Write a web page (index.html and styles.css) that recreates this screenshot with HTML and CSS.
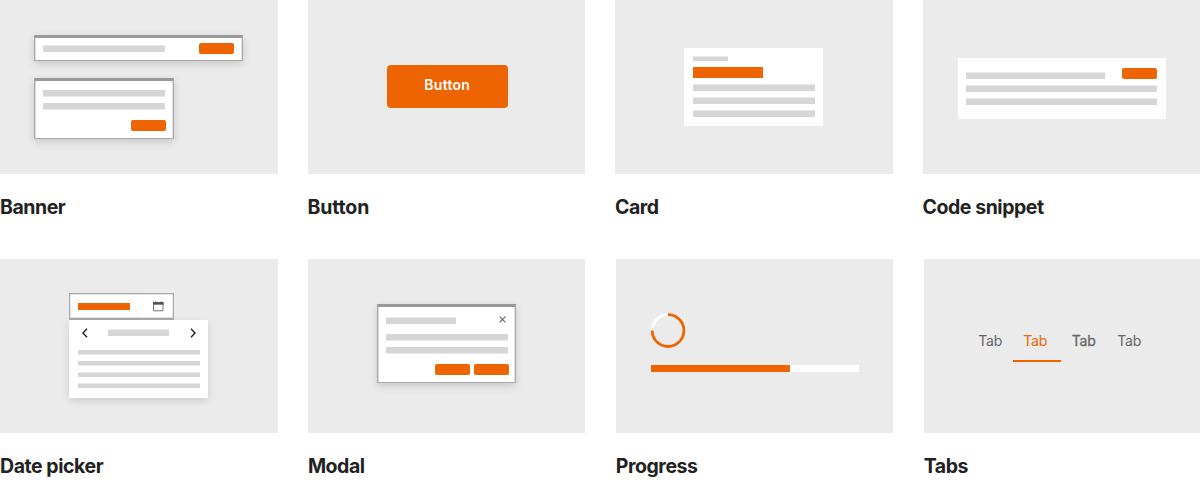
FILE: index.html
```html
<!DOCTYPE html>
<html lang="en">
<head>
<meta charset="utf-8">
<title>Components</title>
<link rel="stylesheet" href="styles.css">
</head>
<body>
<main class="gallery">
  <section class="row row-first">
    <article class="item">
      <div class="thumb thumb-banner">
        <div class="panel banner-wide"><span class="line line-top w122"></span><span class="pill"></span></div>
        <div class="panel banner-box"><span class="line w122"></span><span class="line w122"></span><span class="pill"></span></div>
      </div>
      <h2>Banner</h2>
    </article>
    <article class="item">
      <div class="thumb thumb-button"><div class="big-button">Button</div></div>
      <h2 class="title-button">Button</h2>
    </article>
    <article class="item">
      <div class="thumb thumb-card">
        <div class="sheet card">
          <span class="line line-thin line-top w35"></span>
          <span class="card-title"></span>
          <span class="line line-top w122"></span><span class="line line-top w122"></span><span class="line line-top w122"></span>
        </div>
      </div>
      <h2>Card</h2>
    </article>
    <article class="item">
      <div class="thumb thumb-code">
        <div class="sheet code">
          <div class="code-head"><span class="line line-top w139"></span><span class="pill"></span></div>
          <span class="line line-top w191"></span><span class="line line-top w191"></span>
        </div>
      </div>
      <h2>Code snippet</h2>
    </article>
  </section>

  <section class="row row-second">
    <article class="item">
      <div class="thumb thumb-date">
        <div class="date-field">
          <span class="date-value"></span>
          <svg class="calendar" width="12" height="11" viewBox="0 0 12 11"><path d="M1.5 1.5H11v8.3H1.5z" fill="none" stroke="#777"/><path d="M1 1h10.5v2.7H1z" fill="#555"/><path d="M3.5 .3v1M9 .3v1" stroke="#777"/></svg>
        </div>
        <div class="sheet date-panel">
          <div class="date-nav">
            <svg width="6" height="10" viewBox="0 0 6 10"><path d="M5 .8 1 5l4 4.2" class="chevron"/></svg>
            <span class="line line-top w61"></span>
            <svg width="6" height="10" viewBox="0 0 6 10"><path d="m1 .8 4 4.2-4 4.2" class="chevron"/></svg>
          </div>
          <div class="date-lines">
            <span class="line line-thin w122"></span><span class="line line-thin w122"></span><span class="line line-thin line-top w122"></span><span class="line line-thin line-top w122"></span>
          </div>
        </div>
      </div>
      <h2>Date picker</h2>
    </article>
    <article class="item">
      <div class="thumb thumb-modal">
        <div class="panel modal">
          <div class="modal-head"><span class="line line-top w70"></span><svg width="7" height="7" viewBox="0 0 7 7"><path d="m.6.6 5.8 5.8M6.4.6.6 6.4" stroke="#666" stroke-width="1.2"/></svg></div>
          <div class="modal-body"><span class="line w122"></span><span class="line w122"></span></div>
          <div class="modal-actions"><span class="pill"></span><span class="pill"></span></div>
        </div>
      </div>
      <h2>Modal</h2>
    </article>
    <article class="item">
      <div class="thumb thumb-progress">
        <svg class="ring" width="36" height="36" viewBox="0 0 36 36"><g fill="none" stroke-width="2.8"><circle cx="17" cy="17.6" r="15.9" stroke="#fff"/><path d="M17 1.7A15.9 15.9 0 1 1 1.1 17.6" stroke="#ed6400"/></g></svg>
        <div class="track"><div class="fill"></div></div>
      </div>
      <h2>Progress</h2>
    </article>
    <article class="item">
      <div class="thumb thumb-tabs">
        <span class="tab">Tab</span><span class="tab tab-active">Tab</span><span class="tab tab-strong">Tab</span><span class="tab">Tab</span>
      </div>
      <h2>Tabs</h2>
    </article>
  </section>
</main>
</body>
</html>
```
FILE: styles.css
```css
* { box-sizing: border-box; }
body { margin: 0; background: #fff; color: #222; font-family: Inter, "Liberation Sans", sans-serif; }
.gallery { width: 1200px; height: 480px; overflow: hidden; }
.row { display: grid; column-gap: 30px; }
.row-first { grid-template-columns: 277.5px 277.5px 277.5px 277.5px; height: 259px; }
.row-second { grid-template-columns: 277.5px 277.5px 277.5px 276.5px; column-gap: 30.4px; }
.thumb { height: 174px; background: #ebebeb; }
h2 { margin: 20px 0 0; font-size: 19.5px; line-height: 26px; font-weight: 700; letter-spacing: -0.45px; white-space: nowrap; }
.title-button { letter-spacing: -0.15px; }
svg { display: block; flex: none; }

.line { display: block; flex: none; height: 7px; background: #d6d6d6; border-bottom: 1px solid #e9e9e9; }
.line-top { border-bottom: 0; border-top: 1px solid #e9e9e9; }
.line-thin { height: 5px; }
.w35 { width: 35px; }
.w61 { width: 61px; }
.w70 { width: 70px; }
.w122 { width: 122px; }
.w139 { width: 139px; }
.w191 { width: 191px; }
.pill { display: block; flex: none; width: 35px; height: 11px; border-radius: 2px; background: #ed6400; }

.panel { background: #fff; border: 1px solid #a9a9a9; border-top: 3px solid #999; box-shadow: inset 0.5px 0 0 #b5b5b5, inset -0.5px 0 0 #c5c5c5, 0 3px 8px rgba(0, 0, 0, 0.15); }
.sheet { background: #fff; }

.thumb-banner { display: flex; flex-direction: column; gap: 17px; padding: 35px 0 0 34px; }
.banner-wide { display: flex; justify-content: space-between; align-items: flex-start; width: 209px; height: 26px; padding: 5px 8px 0; }
.banner-wide .line { margin-top: 2px; }
.banner-box { display: flex; flex-direction: column; gap: 6px; width: 140px; height: 61px; padding: 9px 7px 0 8px; }
.banner-box .pill { align-self: flex-end; margin-top: 4px; }

.thumb-button { padding: 65px 0 0 79.5px; }
.big-button { width: 120.5px; height: 43.4px; border-radius: 4px; background: #ed6400; color: #fff; font-size: 14px; line-height: 40px; font-weight: 600; letter-spacing: 0.3px; text-align: center; }

.thumb-card { padding: 48px 0 0 69px; }
.card { display: flex; flex-direction: column; gap: 6px; width: 139px; height: 78px; padding: 8px 9px; }
.card-title { flex: none; width: 70px; height: 11px; background: #ed6400; }

.thumb-code { padding: 58px 0 0 35px; }
.code { display: flex; flex-direction: column; gap: 6px; width: 208px; height: 61px; padding: 10px 9px 0 8px; }
.code-head { display: flex; justify-content: space-between; align-items: flex-start; height: 11px; }
.code-head .line { margin-top: 4px; }

.thumb-date { padding: 34px 0 0 69px; }
.date-field { display: flex; justify-content: space-between; align-items: center; width: 105px; height: 27px; padding: 0 9px 0 8px; background: #fff; border: 1px solid #aaa; border-bottom: 2px solid #aaa; box-shadow: inset 0 0 0 0.5px #ccc; }
.date-value { width: 52px; height: 7px; background: #ed6400; }
.date-panel { width: 139px; height: 78px; padding: 8px 9px 0; box-shadow: 0 3px 8px rgba(0, 0, 0, 0.13); }
.date-nav { display: flex; justify-content: space-between; align-items: center; height: 9px; padding: 0 3px 0 4px; }
.date-nav .line { margin-left: -1px; }
.chevron { fill: none; stroke: #222; stroke-width: 1.4; }
.date-lines { display: flex; flex-direction: column; gap: 6px; padding-top: 13px; }

.thumb-modal { padding: 45px 0 0 69px; }
.modal { width: 139px; height: 79px; padding: 10px 6px 0 8px; }
.modal-head { display: flex; justify-content: space-between; height: 17px; padding-right: 3px; }
.modal-head svg { margin-top: -1px; }
.modal-body { display: flex; flex-direction: column; gap: 6px; }
.modal-actions { display: flex; justify-content: flex-end; gap: 4px; margin-top: 10px; }

.thumb-progress { padding: 54px 0 0 35px; }
.track { width: 208px; height: 7px; margin-top: 16px; background: #fff; }
.fill { width: 139px; height: 100%; background: #ed6400; }

.thumb-tabs { display: flex; align-items: flex-start; padding: 72px 0 0 44px; font-size: 14px; line-height: 20px; letter-spacing: -0.2px; color: #666; }
.tab { width: 45px; height: 31px; text-align: center; }
.tab-active { width: 48px; color: #ed6400; border-bottom: 2px solid #ed6400; padding-right: 3px; }
.tab-strong { width: 46px; -webkit-text-stroke: 0.3px #666; }
```
